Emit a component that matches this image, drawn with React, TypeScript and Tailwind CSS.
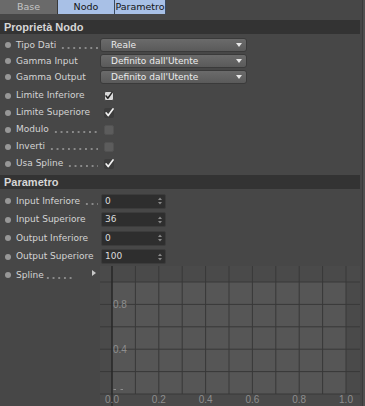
import React from "react";

function Bullet() {
  return <span className="w-[6px] h-[6px] rounded-full bg-[#979797] shrink-0 ml-[5px] mr-[5px]" />;
}

function Leader({ className }: { className?: string }) {
  return (
    <span
      className={
        "h-[2px] self-center mt-[5px] bg-[radial-gradient(circle,#8a8a8a_0.7px,transparent_1.1px)] bg-[length:5.7px_2px] bg-repeat-x " +
        (className || "")
      }
    />
  );
}

function Label({ text, dots }: { text: string; dots?: boolean }) {
  return (
    <div className="w-[100px] h-full flex items-center shrink-0 overflow-hidden">
      <Bullet />
      <span className="text-[#d4d4d4] whitespace-nowrap">{text}</span>
      {dots && <Leader className="flex-1 ml-[4px] mr-[2px]" />}
    </div>
  );
}

function Header({ text }: { text: string }) {
  return (
    <div className="h-[14px] bg-[#333333] flex items-center pl-[4px] font-['Liberation_Sans',sans-serif] font-bold text-[11px] text-[#d6d6d6]">
      {text}
    </div>
  );
}

function Dropdown({ text }: { text: string }) {
  return (
    <div className="w-[147px] h-[14px] rounded-[3px] bg-gradient-to-b from-[#6b6b6b] to-[#5a5a5a] border border-[#3a3a3a] flex items-center pl-[10px] pr-[4px] text-[#ececec]">
      <span className="whitespace-nowrap">{text}</span>
      <svg className="ml-auto" width="6" height="4" viewBox="0 0 6 4">
        <path d="M0 0 L6 0 L3 4 Z" fill="#e8e8e8" />
      </svg>
    </div>
  );
}

function Check({ state }: { state: "light" | "dark" | "off" }) {
  if (state === "off") {
    return <div className="ml-[4px] w-[10px] h-[10px] rounded-[2px] bg-[#5c5c5c] border border-[#525252]" />;
  }
  const light = state === "light";
  return (
    <div
      className={
        "ml-[4px] w-[10px] h-[10px] rounded-[2px] flex items-center justify-center " +
        (light ? "bg-[#d8d8d8] border border-[#444]" : "bg-[#3c3c3c]")
      }
    >
      <svg width="9" height="9" viewBox="0 0 9 9">
        <path
          d="M1.2 5 L3.2 7.6 L8 1"
          fill="none"
          stroke={light ? "#222" : "#f2f2f2"}
          strokeWidth="1.7"
          strokeLinecap="round"
          strokeLinejoin="round"
        />
      </svg>
    </div>
  );
}

function NumInput({ value }: { value: string }) {
  return (
    <div className="ml-[1px] w-[65px] h-[15px] rounded-[2px] bg-[#2e2e2e] border border-[#3c3c3c] flex items-center pl-[3px] pr-[3px] text-[#dcdcdc]">
      <span>{value}</span>
      <svg className="ml-auto" width="4" height="8" viewBox="0 0 4 8">
        <path d="M0 3 L2 0.5 L4 3 Z" fill="#8a8a8a" />
        <path d="M0 5 L2 7.5 L4 5 Z" fill="#8a8a8a" />
      </svg>
    </div>
  );
}

function Graph() {
  const W = 260;
  const H = 140;
  const x0 = 12;
  const cw = 23.4;
  const y0 = 16;
  const ch = 22.4;
  const vx = Array.from({ length: 11 }, (_, k) => x0 + k * cw);
  const hy = Array.from({ length: 6 }, (_, j) => y0 + j * ch);
  const xl = ["0.0", "0.2", "0.4", "0.6", "0.8", "1.0"];
  return (
    <svg width={W} height={H} viewBox={`0 0 ${W} ${H}`} className="block">
      <rect x="0" y="0" width={W} height={H} fill="#4a4a4a" />
      <rect x={x0} y={y0} width={10 * cw} height={5 * ch} fill="#565656" />
      {hy.map((y, i) => (
        <line key={"h" + i} x1="0" x2={W} y1={y} y2={y} stroke="#383838" strokeWidth="1" />
      ))}
      {vx.map((x, i) => (
        <line key={"v" + i} x1={x} x2={x} y1="0" y2={y0 + 5 * ch} stroke="#383838" strokeWidth="1" />
      ))}
      <line x1={x0} x2={x0} y1="0" y2={H} stroke="#1e1e1e" strokeWidth="1" />
      <text x={x0 + 1} y={y0 + ch + 3.5} fill="#8e8e8e" fontSize="10" fontFamily="Liberation Sans, sans-serif">0.8</text>
      <text x={x0 + 1} y={y0 + 3 * ch + 3.5} fill="#8e8e8e" fontSize="10" fontFamily="Liberation Sans, sans-serif">0.4</text>
      <line x1={x0 + 1.5} x2={x0 + 4} y1="123.5" y2="123.5" stroke="#8e8e8e" strokeWidth="1" />
      <line x1={x0 + 8.5} x2={x0 + 11} y1="123.5" y2="123.5" stroke="#8e8e8e" strokeWidth="1" />
      {xl.map((t, i) => (
        <text
          key={t}
          x={x0 + i * 2 * cw}
          y="137"
          fill="#8e8e8e"
          fontSize="10"
          textAnchor="middle"
          fontFamily="Liberation Sans, sans-serif"
        >
          {t}
        </text>
      ))}
    </svg>
  );
}

export default function App() {
  return (
    <div className="w-[365px] h-[406px] overflow-hidden bg-[#474747] flex font-['DejaVu_Sans',sans-serif] text-[9px] leading-none">
      <div className="w-[360px] flex flex-col shrink-0">
        {/* Tabs */}
        <div className="h-[14px] flex text-[9.5px]">
          <div className="w-[58px] h-full bg-[#6a6a6a] border-r border-[#3a3a3a] flex items-center justify-center text-[#c4c4c4]">
            Base
          </div>
          <div className="w-[57px] h-full bg-[#a8c0e6] border-r border-[#3a4a60] flex items-center justify-center text-[#141414]">
            Nodo
          </div>
          <div className="w-[51px] h-full bg-[#a8c0e6] border-r border-[#3a4a60] flex items-center justify-center text-[#141414]">
            Parametro
          </div>
        </div>
        <div className="h-[6px]" />
        <Header text="Proprietà Nodo" />
        <div className="h-[3px]" />
        <div className="h-[16px] flex items-center">
          <Label text="Tipo Dati" dots />
          <Dropdown text="Reale" />
        </div>
        <div className="h-[16px] flex items-center">
          <Label text="Gamma Input" />
          <Dropdown text="Definito dall'Utente" />
        </div>
        <div className="h-[16px] flex items-center">
          <Label text="Gamma Output" />
          <Dropdown text="Definito dall'Utente" />
        </div>
        <div className="h-[2px]" />
        <div className="h-[17px] flex items-center">
          <Label text="Limite Inferiore" />
          <Check state="light" />
        </div>
        <div className="h-[17px] flex items-center">
          <Label text="Limite Superiore" />
          <Check state="dark" />
        </div>
        <div className="h-[17px] flex items-center">
          <Label text="Modulo" dots />
          <Check state="off" />
        </div>
        <div className="h-[17px] flex items-center">
          <Label text="Inverti" dots />
          <Check state="off" />
        </div>
        <div className="h-[17px] flex items-center">
          <Label text="Usa Spline" dots />
          <Check state="dark" />
        </div>
        <div className="h-[3px]" />
        <Header text="Parametro" />
        <div className="h-[3px]" />
        <div className="h-[18.5px] flex items-center">
          <Label text="Input Inferiore" dots />
          <NumInput value="0" />
        </div>
        <div className="h-[18.5px] flex items-center">
          <Label text="Input Superiore" />
          <NumInput value="36" />
        </div>
        <div className="h-[18.5px] flex items-center">
          <Label text="Output Inferiore" />
          <NumInput value="0" />
        </div>
        <div className="h-[18.5px] flex items-center">
          <Label text="Output Superiore" />
          <NumInput value="100" />
        </div>
        <div className="flex flex-1">
          <div className="w-[100px] h-[18px] flex items-center shrink-0 relative">
            <Bullet />
            <span className="text-[#d4d4d4] whitespace-nowrap">Spline</span>
            <Leader className="w-[28px] ml-[1px]" />
            <svg className="absolute left-[92px] top-[4px]" width="4" height="6" viewBox="0 0 4 6">
              <path d="M0 0 L4 3 L0 6 Z" fill="#c8c8c8" />
            </svg>
          </div>
          <Graph />
        </div>
      </div>
      <div className="w-[5px] h-full flex">
        <div className="w-[2px] h-full bg-[#474747]" />
        <div className="w-[1px] h-full bg-[#3a3a3a]" />
        <div className="w-[2px] h-full bg-[#505050]" />
      </div>
    </div>
  );
}
